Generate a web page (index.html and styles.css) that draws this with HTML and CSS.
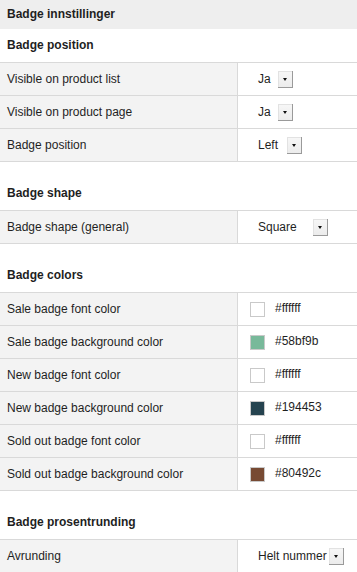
FILE: index.html
```html
<!DOCTYPE html>
<html lang="no">
<head>
  <meta charset="UTF-8" />
  <meta name="viewport" content="width=device-width, initial-scale=1.0"/>
  <title>Badge innstillinger</title>
  <link rel="stylesheet" href="styles.css">
</head>
<body>
  <div class="page-title">Badge innstillinger</div>

  <section class="group group-first">
    <h3>Badge position</h3>
    <table class="settings">
      <tr>
        <td class="label">Visible on product list</td>
        <td class="value"><span class="select"><span class="select-text w-ja">Ja</span><span class="select-btn"></span></span></td>
      </tr>
      <tr>
        <td class="label">Visible on product page</td>
        <td class="value"><span class="select"><span class="select-text w-ja">Ja</span><span class="select-btn"></span></span></td>
      </tr>
      <tr>
        <td class="label">Badge position</td>
        <td class="value"><span class="select"><span class="select-text w-left">Left</span><span class="select-btn"></span></span></td>
      </tr>
    </table>
  </section>

  <section class="group">
    <h3>Badge shape</h3>
    <table class="settings">
      <tr>
        <td class="label">Badge shape (general)</td>
        <td class="value"><span class="select"><span class="select-text w-square">Square</span><span class="select-btn"></span></span></td>
      </tr>
    </table>
  </section>

  <section class="group">
    <h3>Badge colors</h3>
    <table class="settings">
      <tr>
        <td class="label">Sale badge font color</td>
        <td class="value color"><span class="swatch" style="background:#ffffff"></span>#ffffff</td>
      </tr>
      <tr>
        <td class="label">Sale badge background color</td>
        <td class="value color"><span class="swatch" style="background:#78b99a"></span>#58bf9b</td>
      </tr>
      <tr>
        <td class="label">New badge font color</td>
        <td class="value color"><span class="swatch" style="background:#ffffff"></span>#ffffff</td>
      </tr>
      <tr>
        <td class="label">New badge background color</td>
        <td class="value color"><span class="swatch" style="background:#25434f"></span>#194453</td>
      </tr>
      <tr>
        <td class="label">Sold out badge font color</td>
        <td class="value color"><span class="swatch" style="background:#ffffff"></span>#ffffff</td>
      </tr>
      <tr>
        <td class="label">Sold out badge background color</td>
        <td class="value color"><span class="swatch" style="background:#774a33"></span>#80492c</td>
      </tr>
    </table>
  </section>

  <section class="group">
    <h3>Badge prosentrunding</h3>
    <table class="settings">
      <tr>
        <td class="label">Avrunding</td>
        <td class="value"><span class="select"><span class="select-text w-helt">Helt nummer</span><span class="select-btn"></span></span></td>
      </tr>
    </table>
  </section>
</body>
</html>
```

FILE: styles.css
```css
:root {
  --text: #1f1f1f;
  --line: #d9d9d9;
  --label-bg: #f3f3f3;
  --header-bg: #eeeeee;
}

* {
  box-sizing: border-box;
}

body {
  margin: 0;
  padding: 0;
  font-family: 'Liberation Sans', Arial, sans-serif;
  font-size: 12px;
  color: var(--text);
  background: #fff;
}

.page-title {
  height: 29px;
  line-height: 29px;
  padding: 0 7px;
  font-weight: 700;
  background: var(--header-bg);
}

.group {
  margin-top: 15px;
}

.group-first {
  margin-top: 0;
}

.group h3 {
  margin: 0;
  height: 33px;
  line-height: 33px;
  padding: 0 7px;
  font-size: 12px;
  font-weight: 700;
}

.settings {
  width: 100%;
  border-collapse: separate;
  border-spacing: 0;
  table-layout: fixed;
  border-top: 1px solid var(--line);
}

.settings td {
  height: 33px;
  padding: 0;
  border-bottom: 1px solid var(--line);
  vertical-align: middle;
}

.settings .label {
  width: 238px;
  padding-left: 7px;
  background: var(--label-bg);
  border-right: 1px solid var(--line);
}

.settings .value {
  padding-left: 20px;
}

.settings .value.color {
  padding-left: 12px;
}

.select {
  display: inline-flex;
  align-items: center;
}

.select-text {
  display: inline-block;
}

.w-ja { width: 20px; }
.w-left { width: 29px; }
.w-square { width: 55px; }
.w-helt { width: 71px; }

.select-btn {
  position: relative;
  display: inline-block;
  width: 15px;
  height: 17px;
  background: linear-gradient(#f7f7f7, #ececec);
  border-right: 1px solid #9a9a9a;
  border-bottom: 1px solid #9a9a9a;
  box-shadow: inset 1px 1px 0 #e2e2e2;
}

.select-btn::after {
  content: "";
  position: absolute;
  left: 5px;
  top: 7px;
  border-left: 2.5px solid transparent;
  border-right: 2.5px solid transparent;
  border-top: 3px solid #111;
}

.swatch {
  display: inline-block;
  width: 15px;
  height: 15px;
  margin-right: 10px;
  border: 1px solid #c9c9c9;
  vertical-align: middle;
}
```
